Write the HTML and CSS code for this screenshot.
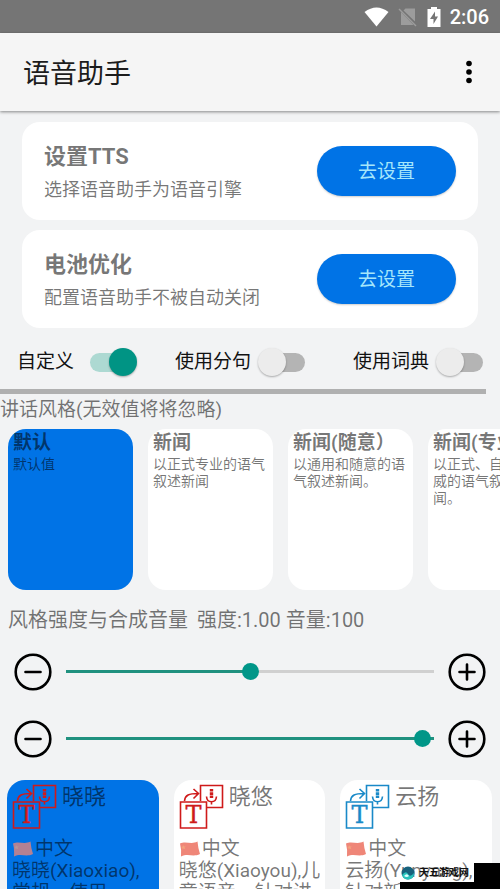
FILE: index.html
```html
<!DOCTYPE html>
<html lang="zh-CN">
<head>
<meta charset="utf-8">
<meta name="viewport" content="width=device-width, initial-scale=1">
<title>语音助手</title>
<link rel="stylesheet" href="styles.css">
</head>
<body>
<svg class="defs" aria-hidden="true">
  <symbol id="speech" viewBox="0 0 46 46">
    <g fill="none" stroke="currentColor" stroke-width="1.6">
      <path d="M21.500 17V1.500H43.500V23.500H27.500"/>
      <path d="M1.500 18H27.500V44H1.500Z"/>
      <path d="M5.500 17C6 11 10 9.500 19 9.500M14.500 5L19.500 9.500L14.500 14.500"/>
      <path d="M27.500 12.500C28 19.500 37 19.500 37.500 12.500M32.500 17.500V20.500"/>
      <path d="M32.500 5V14" stroke-width="3.400" stroke-dasharray="2.600 .7"/>
    </g>
    <text x="14.500" y="39" text-anchor="middle" class="speech-letter">T</text>
  </symbol>
  <symbol id="flag" viewBox="0 0 22 18">
    <path d="M1 3.500C7 .5 12 5 18.500 1.500Q19 8 21 14C14 17.500 9 13 2 16.500Q2.500 9 1 3.500Z" fill="#ef8678"/>
    <path d="M4 5l1 1.500 1.800-.2-1.200 1.300.7 1.600-1.600-.7-1.300 1.100.1-1.700-1.300-1 1.600-.3z" fill="#f3a27c"/>
  </symbol>
  <symbol id="minus" viewBox="0 0 38 38">
    <circle cx="19" cy="19" r="17.300" fill="none" stroke="#000" stroke-width="2.600"/>
    <path d="M11.500 19H26.500" stroke="#000" stroke-width="2.600" stroke-linecap="round"/>
  </symbol>
  <symbol id="plus" viewBox="0 0 38 38">
    <circle cx="19" cy="19" r="17.300" fill="none" stroke="#000" stroke-width="2.600"/>
    <path d="M11.500 19H26.500M19 11.500V26.500" stroke="#000" stroke-width="2.600" stroke-linecap="round"/>
  </symbol>
</svg>

<div class="app">
  <div class="status-bar">
    <svg width="25" height="20" viewBox="0 0 25 20"><path d="M.5 5Q12.500-4 24.500 5L12.500 19.500Z" fill="#fff"/></svg>
    <svg width="20" height="20" viewBox="0 0 20 20"><path d="M7.500 1.500H17V14.500L5.500 3.500ZM3 5L15.500 18H3Z" fill="#9c9c9c"/><path d="M1 2L18 19" stroke="#9c9c9c" stroke-width="1.500"/></svg>
    <svg width="14" height="20" viewBox="0 0 14 20"><path d="M4 0H10V2H13.500V20H.5V2H4Z" fill="#fff"/><path d="M8 4.500L3 12H6.500V17L11 9.500H8Z" fill="#757575"/></svg>
    <span class="clock">2:06</span>
  </div>

  <header class="app-bar">
    <h1>语音助手</h1>
    <button class="menu-button" aria-label="更多选项">
      <svg width="6" height="24" viewBox="0 0 6 24"><circle cx="3" cy="3.500" r="2.800"/><circle cx="3" cy="12" r="2.800"/><circle cx="3" cy="20.500" r="2.800"/></svg>
    </button>
  </header>

  <main>
    <section class="setup">
      <div class="setup-card">
        <div>
          <h2>设置TTS</h2>
          <p>选择语音助手为语音引擎</p>
        </div>
        <button class="pill">去设置</button>
      </div>
      <div class="setup-card">
        <div>
          <h2>电池优化</h2>
          <p>配置语音助手不被自动关闭</p>
        </div>
        <button class="pill">去设置</button>
      </div>
    </section>

    <div class="switches">
      <label class="switch switch-short">自定义<input type="checkbox" role="switch" checked></label>
      <label class="switch">使用分句<input type="checkbox" role="switch"></label>
      <label class="switch">使用词典<input type="checkbox" role="switch"></label>
    </div>

    <hr>

    <h3 class="style-heading">讲话风格(无效值将将忽略)</h3>
    <div class="styles">
      <article class="style-card selected"><h4>默认</h4><p>默认值</p></article>
      <article class="style-card"><h4>新闻</h4><p>以正式专业的语气叙述新闻</p></article>
      <article class="style-card"><h4>新闻(随意）</h4><p>以通用和随意的语气叙述新闻。</p></article>
      <article class="style-card"><h4>新闻(专业）</h4><p>以正式、自信和权威的语气叙述新闻。</p></article>
    </div>

    <p class="levels"><span>风格强度与合成音量</span><span>强度:1.00 音量:100</span></p>
    <div class="slider-row">
      <button class="step" aria-label="降低强度"><svg><use href="#minus"/></svg></button>
      <input type="range" aria-label="强度" min="0" max="2" step="0.01" value="1" style="--fill: 50%">
      <button class="step" aria-label="提高强度"><svg><use href="#plus"/></svg></button>
    </div>
    <div class="slider-row">
      <button class="step" aria-label="降低音量"><svg><use href="#minus"/></svg></button>
      <input type="range" aria-label="音量" min="0" max="101" value="100" style="--fill: 100%">
      <button class="step" aria-label="提高音量"><svg><use href="#plus"/></svg></button>
    </div>

    <div class="voices">
      <article class="voice-card selected">
        <div class="voice-head"><svg class="speech red"><use href="#speech"/></svg><h4>晓晓</h4></div>
        <div class="language"><svg class="flag"><use href="#flag"/></svg>中文</div>
        <p>晓晓(Xiaoxiao),<br>常规、使用</p>
      </article>
      <article class="voice-card">
        <div class="voice-head"><svg class="speech red"><use href="#speech"/></svg><h4>晓悠</h4></div>
        <div class="language"><svg class="flag"><use href="#flag"/></svg>中文</div>
        <p>晓悠(Xiaoyou),儿童语音，针对讲</p>
      </article>
      <article class="voice-card">
        <div class="voice-head"><svg class="speech blue"><use href="#speech"/></svg><h4>云扬</h4></div>
        <div class="language"><svg class="flag"><use href="#flag"/></svg>中文</div>
        <p>云扬(Yunyang),<br>针对新</p>
      </article>
    </div>
  </main>

  <div class="site-badge">
    <svg width="14" height="14" viewBox="0 0 14 14"><circle cx="7" cy="7" r="6.500" fill="#17627d"/><path d="M1 9Q5 4 7 8T13 7Q13 13.500 7 13.500Q2.500 13.500 1 9Z" fill="#27c4bd"/><path d="M3 10Q6 6.500 8 10Q6 12 3 10Z" fill="#dff"/></svg>
    <span>天五游戏网</span>
  </div>
</div>
</body>
</html>
```
FILE: styles.css
```css
* {
  box-sizing: border-box;
}

body,
h1,
h2,
h3,
h4,
p {
  margin: 0;
}

body {
  font-family: Roboto, "Noto Sans CJK SC", sans-serif;
  font-size: 19px;
  line-height: 22px;
  color: rgba(0, 0, 0, 0.54);
  background: #f2f3f4;
}

button {
  padding: 0;
  border: 0;
  background: none;
  font: inherit;
  cursor: pointer;
}

svg {
  display: block;
  flex: none;
}

.defs {
  position: absolute;
  width: 0;
  height: 0;
}

.app {
  position: relative;
  height: 100vh;
  overflow: hidden;
}

.status-bar {
  display: flex;
  align-items: center;
  justify-content: flex-end;
  gap: 9px;
  height: 33px;
  padding-right: 11px;
  background: #757575;
}

.clock {
  color: #fff;
  font-size: 20px;
  font-weight: 500;
}

.app-bar {
  display: flex;
  align-items: center;
  justify-content: space-between;
  height: 78px;
  padding: 0 16px 0 23px;
  background: #f5f5f5;
  box-shadow: 0 1px 3px rgba(0, 0, 0, 0.45);
}

.app-bar h1 {
  padding-top: 3px;
  font-size: 27px;
  line-height: 36px;
  font-weight: 400;
  color: #1c1c1c;
}

.menu-button {
  display: flex;
  justify-content: center;
  width: 30px;
}

.setup {
  display: grid;
  gap: 10px;
  padding: 11px 22px 0;
}

.setup-card {
  display: flex;
  align-items: center;
  justify-content: space-between;
  height: 98px;
  padding: 0 22px;
  border-radius: 18px;
  background: #fff;
}

.setup-card h2 {
  padding-top: 4px;
  font-size: 22px;
  line-height: 34px;
  font-weight: 700;
}

.setup-card p {
  font-size: 18px;
  line-height: 32px;
}

.pill {
  width: 139px;
  height: 50px;
  padding-top: 2px;
  border-radius: 25px;
  background: #0073e6;
  color: #a5e6fb;
  box-shadow: 0 1px 2px rgba(0, 0, 0, 0.2);
}

.switches {
  display: grid;
  grid-template-columns: 158fr 178fr 130fr;
  padding: 20px 17px 13px;
}

.switch {
  display: flex;
  align-items: center;
  justify-content: space-between;
  width: 130px;
  color: #111;
}

.switch-short {
  width: 120px;
}

.switch input {
  appearance: none;
  display: grid;
  align-items: center;
  width: 47px;
  height: 28px;
  margin: 0;
}

.switch input::before,
.switch input::after {
  content: "";
  grid-area: 1 / 1;
}

.switch input::before {
  height: 19px;
  margin-left: 8px;
  border-radius: 10px;
  background: #b4b4b4;
}

.switch input::after {
  width: 28px;
  height: 28px;
  border-radius: 50%;
  background: #ececec;
  box-shadow: 0 1px 2px rgba(0, 0, 0, 0.3);
}

.switch input:checked::before {
  margin: 0 8px 0 0;
  background: #add9d2;
}

.switch input:checked::after {
  justify-self: end;
  background: #009484;
}

hr {
  height: 5px;
  margin: 0 14px 0 0;
  border: 0;
  background: #b0b0b0;
}

.style-heading {
  padding: 5px 0 8px;
  font-size: 19px;
  font-weight: 400;
}

.styles {
  display: flex;
  gap: 15px;
  padding-left: 8px;
  overflow: hidden;
}

.style-card {
  flex: none;
  width: 125px;
  height: 161px;
  padding: 1px 6px 0 5px;
  border-radius: 18px;
  background: #fff;
}

.style-card h4 {
  font-size: 19px;
  line-height: 26px;
  font-weight: 700;
  white-space: nowrap;
}

.style-card p {
  font-size: 14px;
  line-height: 17px;
}

.style-card.selected,
.voice-card.selected {
  background: #0073e6;
}

.levels {
  display: flex;
  gap: 9px;
  padding: 19px 8px 7px;
  font-size: 20px;
}

.slider-row {
  display: flex;
  align-items: center;
  gap: 14px;
  height: 67px;
  padding: 0 14px;
}

.step svg {
  width: 38px;
  height: 38px;
}

.slider-row input {
  appearance: none;
  flex: 1;
  min-width: 0;
  height: 20px;
  margin: 0;
  background: none;
}

.slider-row input::-webkit-slider-runnable-track {
  height: 3px;
  background: linear-gradient(to right, #20917f var(--fill), #d0d0d0 var(--fill));
}

.slider-row input::-webkit-slider-thumb {
  appearance: none;
  width: 17px;
  height: 17px;
  margin-top: -7px;
  border-radius: 50%;
  background: #009688;
}

.voices {
  display: grid;
  grid-template-columns: repeat(3, 1fr);
  gap: 15px;
  padding: 8px 8px 0 7px;
}

.voice-card {
  min-height: 160px;
  padding: 4px 5px;
  border-radius: 18px;
  background: #fff;
}

.voice-head {
  display: flex;
  gap: 4px;
  height: 54px;
}

.voice-head h4 {
  font-size: 22px;
  line-height: 26px;
  font-weight: 400;
}

.speech {
  width: 46px;
  height: 46px;
}

.speech-letter {
  font-family: "DejaVu Serif", serif;
  font-size: 24px;
  fill: currentColor;
  stroke: currentColor;
  stroke-width: 0.4px;
}

.red {
  color: #cf1a1a;
}

.blue {
  color: #1989c8;
}

.language {
  display: flex;
  align-items: center;
  gap: 1px;
}

.flag {
  width: 22px;
  height: 18px;
}

.selected .flag {
  opacity: 0.75;
}

.site-badge {
  position: absolute;
  right: 0;
  bottom: 0;
  display: flex;
  align-items: center;
  gap: 4px;
  width: 100px;
  height: 26px;
  padding-left: 1px;
  border: solid #000;
  border-width: 0 26px 7px 0;
  color: #111;
  font-size: 10px;
  font-weight: 700;
  line-height: 12px;
  white-space: nowrap;
}
```
